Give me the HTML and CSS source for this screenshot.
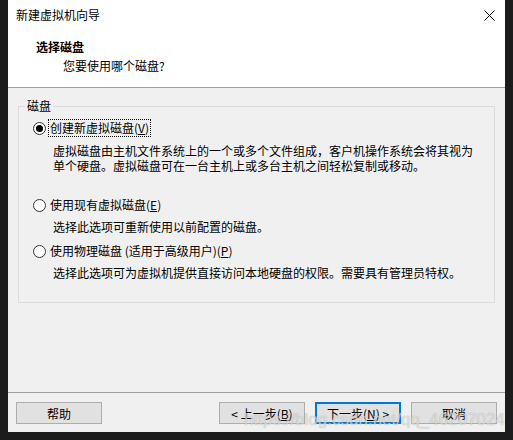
FILE: index.html
```html
<!DOCTYPE html>
<html lang="zh-CN">
<head>
    <meta charset="UTF-8">
    <meta name="viewport" content="width=device-width, initial-scale=1.0">
    <title>新建虚拟机向导</title>
    <link rel="stylesheet" href="styles.css">
</head>
<body>
    <div class="window">
        <div class="titlebar">
            <span class="title">新建虚拟机向导</span>
            <svg class="close" width="11" height="11" viewBox="0 0 11 11">
                <path d="M0.5 0.5 L10.5 10.5 M10.5 0.5 L0.5 10.5" stroke="#000" stroke-width="1" fill="none"/>
            </svg>
        </div>
        <div class="header">
            <p class="header-title">选择磁盘</p>
            <p class="header-sub">您要使用哪个磁盘?</p>
        </div>
        <div class="content">
            <fieldset class="group">
                <legend>磁盘</legend>
                <div class="option first">
                    <i class="radio checked"></i>
                    <span class="label focus">创建新虚拟磁盘(<u>V</u>)</span>
                </div>
                <p class="desc tall">虚拟磁盘由主机文件系统上的一个或多个文件组成，客户机操作系统会将其视为<br>单个硬盘。虚拟磁盘可在一台主机上或多台主机之间轻松复制或移动。</p>
                <div class="option">
                    <i class="radio"></i>
                    <span class="label">使用现有虚拟磁盘(<u>E</u>)</span>
                </div>
                <p class="desc">选择此选项可重新使用以前配置的磁盘。</p>
                <div class="option">
                    <i class="radio"></i>
                    <span class="label">使用物理磁盘 (适用于高级用户)(<u>P</u>)</span>
                </div>
                <p class="desc">选择此选项可为虚拟机提供直接访问本地硬盘的权限。需要具有管理员特权。</p>
            </fieldset>
        </div>
        <div class="footer">
            <button class="btn">帮助</button>
            <div class="spacer"></div>
            <button class="btn">&lt; 上一步(<u>B</u>)</button>
            <button class="btn default">下一步(<u>N</u>) &gt;</button>
            <button class="btn">取消</button>
        </div>
    </div>
    <div class="watermark">https://blog.csdn.net/qq_46207024</div>
</body>
</html>
```
FILE: styles.css
```css
*, :after, :before {
    margin: 0;
    padding: 0;
    box-sizing: border-box;
}
html, body {
    height: 100%;
}
body {
    background: #1c1c1c;
    font-family: "Noto Sans CJK SC", "Liberation Sans", sans-serif;
    font-size: 12px;
    color: #000;
    position: relative;
    overflow: hidden;
}
.window {
    display: flex;
    flex-direction: column;
    width: 497px;
    height: 432px;
    margin-left: 8px;
    background: #f0f0f0;
}
/* 标题栏 */
.titlebar {
    display: flex;
    align-items: center;
    height: 30px;
    padding: 0 10px 0 8px;
    background: #fff;
}
.title {
    flex: 1;
    line-height: 16px;
}
.close {
    display: block;
}
/* 头部 */
.header {
    height: 58px;
    padding: 9px 0 0 28px;
    background: #fff;
    border-bottom: 1px solid #a0a0a0;
}
.header-title {
    font-weight: bold;
    line-height: 16px;
}
.header-sub {
    margin-top: 3px;
    padding-left: 27px;
    line-height: 16px;
}
.content {
    flex: 1;
    padding-top: 10px;
}
.group {
    margin: 0 10px;
    padding: 0 14px 22px 14px;
    border: 1px solid #dcdcdc;
}
.group legend {
    margin-left: -8px;
    padding: 0 2px;
    line-height: 16px;
}
.option {
    display: flex;
    align-items: center;
    height: 18px;
    margin-top: 8px;
}
.option.first {
    margin-top: 5px;
}
.radio {
    display: inline-block;
    position: relative;
    width: 13px;
    height: 13px;
    margin-right: 3px;
    border: 1px solid #333;
    border-radius: 50%;
    background: #fff;
}
.radio.checked::after {
    content: "";
    position: absolute;
    left: 2px;
    top: 2px;
    width: 7px;
    height: 7px;
    border-radius: 50%;
    background: #000;
}
.label {
    line-height: 16px;
    padding: 0 1px;
}
.label.focus {
    outline: 1px dotted #000;
}
.label u {
    text-decoration: underline;
}
.desc {
    margin-top: 5px;
    padding-left: 20px;
    line-height: 15px;
}
.desc.tall {
    margin-top: 6px;
    height: 45px;
}
/* 底部按钮 */
.footer {
    display: flex;
    align-items: flex-start;
    height: 40px;
    padding: 9px 8px 0 8px;
    border-top: 1px solid #a0a0a0;
}
.spacer {
    flex: 1;
}
.btn {
    width: 86px;
    height: 22px;
    margin-left: 10px;
    font-family: inherit;
    font-size: 12px;
    color: #000;
    background: #e1e1e1;
    border: 1px solid #adadad;
}
.btn:first-child {
    margin-left: 0;
}
.btn.default {
    border: 2px solid #0078d7;
}
.watermark {
    position: absolute;
    right: 8px;
    top: 410px;
    font-family: "Liberation Sans", sans-serif;
    font-size: 17px;
    color: rgba(255, 255, 255, 0.55);
    text-shadow: 0 0 1px rgba(120, 120, 120, 0.6);
    pointer-events: none;
}
```
